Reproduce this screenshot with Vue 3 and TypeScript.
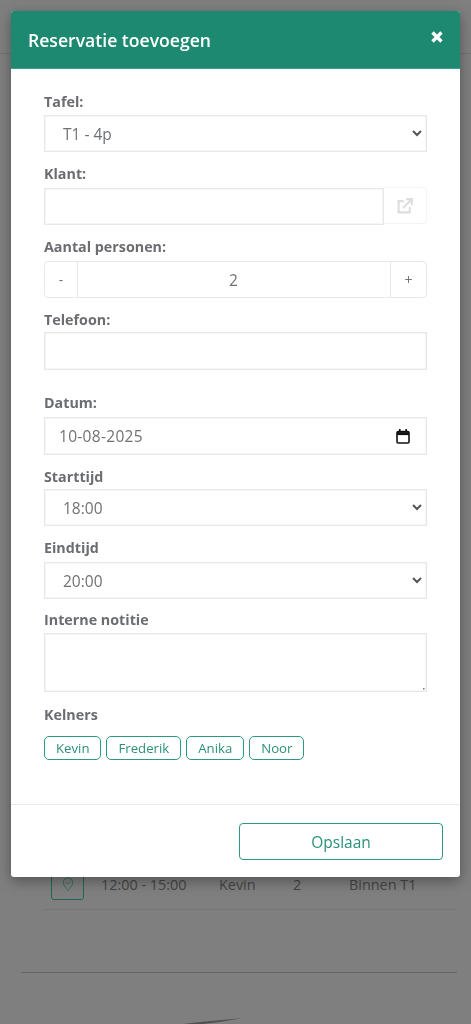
<script setup lang="ts">
const waiters: string[] = ['Kevin', 'Frederik', 'Anika', 'Noor']
const tables: string[] = ['T1 - 4p', 'T2 - 2p']
const startTimes: string[] = ['18:00', '18:30']
const endTimes: string[] = ['20:00', '20:30']
</script>

<template>
  <div class="page">
    <div class="bg-top"></div>
    <div class="bg-row">
      <div class="bg-pin">
        <svg width="12" height="16" viewBox="0 0 14 17" fill="none" stroke="#5cd6bc" stroke-width="1.1">
          <path d="M7 16C4.5 12.8 1.5 10.2 1.5 6.8a5.5 5.5 0 0 1 11 0C12.5 10.2 9.5 12.8 7 16Z" />
          <path d="M4.6 6.8l1.8 1.8 3.2-3.2" />
        </svg>
      </div>
      <span class="bg-time">12:00 - 15:00</span>
      <span class="bg-name">Kevin</span>
      <span class="bg-count">2</span>
      <span class="bg-place">Binnen T1</span>
    </div>
    <div class="bg-rule"></div>
    <svg class="bg-curve" width="60" height="6" viewBox="0 0 60 6">
      <path d="M0 6C14 4 30 3 44 1.5L60 0C44 3 30 5 20 6Z" fill="#a0a0a0" />
    </svg>

    <div class="backdrop"></div>

    <div class="modal">
      <header class="modal-head">
        <h1>Reservatie toevoegen</h1>
        <svg class="close" width="12" height="12" viewBox="0 0 12 12" fill="none" stroke="#fff" stroke-width="3.4">
          <path d="M1.5 1.5l9 9M10.5 1.5l-9 9" />
        </svg>
      </header>

      <form class="modal-body" @submit.prevent>
        <label class="lbl">Tafel:</label>
        <select class="ctl sel">
          <option v-for="t in tables" :key="t">{{ t }}</option>
        </select>

        <label class="lbl lbl-a">Klant:</label>
        <div class="client">
          <input class="ctl" type="text" />
          <span class="client-btn">
            <svg width="16" height="16" viewBox="0 0 16 16" fill="none" stroke="#dedede" stroke-width="2.2">
              <path d="M7 3.2H1.6v11.2h11.2V9" />
              <path d="M6 10l8-8M9.2 1.2h5.6v5.6" />
            </svg>
          </span>
        </div>

        <label class="lbl lbl-a">Aantal personen:</label>
        <div class="stepper">
          <span class="step step-l">-</span>
          <span class="count">2</span>
          <span class="step step-r">+</span>
        </div>

        <label class="lbl lbl-b">Telefoon:</label>
        <input class="ctl tall" type="tel" />

        <label class="lbl lbl-c">Datum:</label>
        <div class="ctl tall date">
          <span>10-08-2025</span>
          <svg width="14" height="15" viewBox="0 0 14 15" fill="none" stroke="#111" stroke-width="1.6">
            <rect x="1" y="2.6" width="12" height="11.4" rx="1.2" />
            <path d="M1 4.6h12" stroke-width="3" />
            <path d="M3.8 0v3M10.2 0v3" />
          </svg>
        </div>

        <label class="lbl lbl-b">Starttijd</label>
        <select class="ctl sel">
          <option v-for="t in startTimes" :key="t">{{ t }}</option>
        </select>

        <label class="lbl lbl-a">Eindtijd</label>
        <select class="ctl sel">
          <option v-for="t in endTimes" :key="t">{{ t }}</option>
        </select>

        <label class="lbl lbl-d">Interne notitie</label>
        <textarea class="ctl note"></textarea>

        <label class="lbl lbl-e">Kelners</label>
        <div class="chips">
          <button v-for="w in waiters" :key="w" type="button" class="chip">{{ w }}</button>
        </div>
      </form>

      <footer class="modal-foot">
        <button type="button" class="save">Opslaan</button>
      </footer>
    </div>
  </div>
</template>

<style>
html,
body {
  margin: 0;
  background: #808080;
}
</style>

<style scoped>
.page {
  position: relative;
  width: 471px;
  height: 1024px;
  overflow: hidden;
  background: #fff;
  font-family: "Open Sans", sans-serif;
  color: #6b6d70;
  box-sizing: border-box;
}
.bg-top {
  height: 53px;
  border-bottom: 1px solid #e6e6e6;
}
.bg-row {
  margin: 802px 14px 0 43px;
  height: 54px;
  padding-left: 8px;
  border-bottom: 1px solid #eee;
  display: flex;
  align-items: flex-start;
  font-size: 14.4px;
  color: #8a8a8a;
  box-sizing: border-box;
}
.bg-row span {
  margin-top: 19px;
  line-height: 20px;
}
.bg-pin {
  width: 33px;
  height: 44px;
  border: 1.5px solid #4fc9ae;
  border-radius: 3px;
  display: flex;
  align-items: flex-end;
  justify-content: center;
  padding-bottom: 7px;
  box-sizing: border-box;
  margin-right: 17px;
}
.bg-time { width: 118px; }
.bg-name { width: 74px; }
.bg-count { width: 56px; }
.bg-rule {
  margin: 62px 14px 0 21px;
  border-top: 1px solid #c9c9c9;
}
.bg-curve {
  position: absolute;
  left: 183px;
  top: 1018px;
}
.backdrop {
  position: absolute;
  inset: 0;
  background: rgba(0, 0, 0, 0.5);
}
.modal {
  position: absolute;
  left: 11px;
  top: 11px;
  width: 449px;
  height: 866px;
  background: #fff;
  border-radius: 3px;
  box-shadow: 0 4px 14px rgba(0, 0, 0, 0.35);
  display: flex;
  flex-direction: column;
  overflow: hidden;
  will-change: transform;
}
.modal-head {
  height: 58px;
  flex: none;
  background: #1d8971;
  display: flex;
  align-items: center;
  justify-content: space-between;
  padding: 0 17px;
  box-sizing: border-box;
  border-bottom: 1px solid #3aa38c;
}
.modal-head h1 {
  margin: 0;
  font-size: 17.6px;
  font-weight: 600;
  color: #fff;
}
.close {
  margin-top: -5px;
}
.modal-body {
  flex: 1;
  padding: 23px 33px 0;
  display: flex;
  flex-direction: column;
  align-items: stretch;
  border-bottom: 1px solid #e9e9e9;
}
.lbl {
  display: block;
  font-size: 14.3px;
  font-weight: 700;
  line-height: 20px;
  height: 20px;
  margin-bottom: 3px;
  color: #6b6d70;
}
.lbl-a { margin-top: 12px; margin-bottom: 4px; }
.lbl-b { margin-top: 12px; margin-bottom: 2px; }
.lbl-c { margin-top: 23px; margin-bottom: 4px; }
.lbl-d { margin-top: 11px; margin-bottom: 3px; }
.lbl-e { margin-top: 13px; margin-bottom: 3px; }
.ctl {
  display: block;
  width: 100%;
  height: 37px;
  box-sizing: border-box;
  border: 1px solid #e8e8e8;
  box-shadow: inset 0 0 0 0.5px #eee;
  border-radius: 0;
  background-color: #fff;
  font-family: "Open Sans", sans-serif;
  font-size: 15.5px;
  color: #6f7275;
  padding: 0 14px;
  outline: none;
  margin: 0;
}
.sel {
  appearance: none;
  padding-left: 18px;
  background-image: url("data:image/svg+xml;utf8,<svg xmlns='http://www.w3.org/2000/svg' width='10' height='7' viewBox='0 0 10 7'><path d='M1 1l4 4 4-4' fill='none' stroke='%23555' stroke-width='2'/></svg>");
  background-repeat: no-repeat;
  background-position: right 4px center;
}
.tall { height: 38px; }
.date {
  display: flex;
  align-items: center;
  justify-content: space-between;
  letter-spacing: 0.3px;
  padding-right: 16px;
}
.client {
  display: flex;
}
.client .ctl {
  flex: 1;
  width: auto;
  min-width: 0;
}
.client-btn {
  width: 43px;
  height: 37px;
  flex: none;
  box-sizing: border-box;
  border: 1px solid #f3f3f3;
  border-left: 0;
  border-radius: 0 4px 4px 0;
  margin-top: -1px;
  display: flex;
  align-items: center;
  justify-content: center;
}
.stepper {
  display: flex;
  height: 37px;
  box-sizing: border-box;
  border: 1px solid #e8e8e8;
  border-radius: 4px;
  font-size: 15.5px;
  color: #6f7275;
}
.step {
  flex: none;
  display: flex;
  align-items: center;
  justify-content: center;
  font-size: 14px;
}
.step-l {
  width: 32px;
  border-right: 1px solid #e8e8e8;
}
.step-r {
  width: 35px;
  border-left: 1px solid #e8e8e8;
  margin-left: 1px;
}
.count {
  flex: 1;
  display: flex;
  align-items: center;
  justify-content: center;
}
.note {
  height: 59px;
  padding: 6px 14px;
  resize: none;
  background: #fff linear-gradient(#777, #777) no-repeat right 2px bottom 2px / 1.5px 1.5px;
}
.chips {
  display: flex;
  gap: 5px;
  margin-top: 8px;
}
.chip {
  height: 24px;
  box-sizing: border-box;
  padding: 0 11px;
  border: 1.5px solid #2a9a82;
  border-radius: 5px;
  background: #fff;
  color: #2a927b;
  font-family: "Open Sans", sans-serif;
  font-size: 13.2px;
  line-height: 20px;
}
.modal-foot {
  height: 72px;
  flex: none;
  display: flex;
  justify-content: flex-end;
  padding: 18px 17px 0 0;
  box-sizing: border-box;
}
.save {
  width: 204px;
  height: 37px;
  box-sizing: border-box;
  border: 1.5px solid #2a9a82;
  border-radius: 4px;
  background: #fff;
  color: #2a927b;
  font-family: "Open Sans", sans-serif;
  font-size: 15.5px;
}
</style>
